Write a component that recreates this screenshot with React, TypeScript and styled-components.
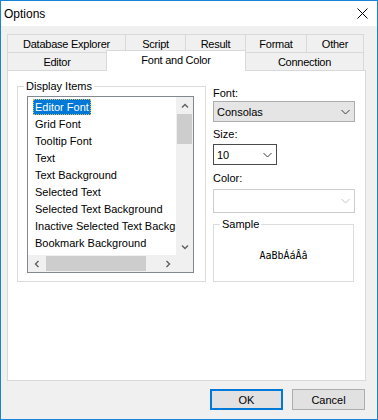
import React from 'react';
import styled, { createGlobalStyle } from 'styled-components';

const GlobalStyle = createGlobalStyle`
  html, body {
    margin: 0;
    padding: 0;
    background: #fff;
  }
  body {
    font-family: "Liberation Sans", Arial, sans-serif;
    font-size: 11px;
    color: #000;
  }
  * {
    box-sizing: border-box;
  }
`;

const Window = styled.div`
  width: 378px;
  height: 420px;
  border: 1px solid #1883d7;
  background: #f0f0f0;
  display: flex;
  flex-direction: column;
`;

const TitleBar = styled.div`
  height: 25px;
  flex-shrink: 0;
  background: #fff;
  display: flex;
  align-items: center;
  justify-content: space-between;
  padding-left: 3px;
  font-size: 12px;
`;

const CloseBox = styled.div`
  width: 30px;
  height: 25px;
  display: flex;
  align-items: center;
  justify-content: center;
`;

const Body = styled.div`
  flex: 1;
  display: flex;
  flex-direction: column;
  padding: 8px 11px 9px 6px;
`;

const TabRow = styled.div`
  display: flex;
  height: 18px;
`;

const Tab = styled.div<{ $w: number; $active?: boolean }>`
  width: ${p => p.$w}px;
  height: ${p => (p.$active ? 21 : 18)}px;
  margin-top: ${p => (p.$active ? -2 : 0)}px;
  background: ${p => (p.$active ? '#fff' : '#f0f0f0')};
  border: 1px solid #d9d9d9;
  border-bottom: none;
  position: relative;
  z-index: ${p => (p.$active ? 2 : 0)};
  display: flex;
  align-items: center;
  justify-content: center;
  letter-spacing: -0.25px;
  padding-bottom: ${p => (p.$active ? 2 : 0)}px;
  & + & {
    margin-left: -1px;
  }
`;

const Panel = styled.div`
  height: 311px;
  background: #fff;
  border: 1px solid #d9d9d9;
  display: flex;
  align-items: flex-start;
  padding: 8px 0 0 9px;
`;

const Group = styled.fieldset<{ $w: number; $h: number }>`
  width: ${p => p.$w}px;
  height: ${p => p.$h}px;
  margin: 0;
  min-width: 0;
  border: 1px solid #dcdcdc;
  padding: 3px 0 0 9px;
`;

const Legend = styled.legend`
  padding: 0 2px;
  margin-left: -3px;
  line-height: 14px;
  font-size: 11px;
`;

const ListBox = styled.div`
  width: 167px;
  height: 177px;
  border: 1px solid #828790;
  display: grid;
  grid-template-columns: 1fr 17px;
  grid-template-rows: 1fr 17px;
`;

const Items = styled.div`
  overflow: hidden;
  padding-top: 1px;
`;

const Item = styled.div<{ $selected?: boolean }>`
  height: 17px;
  padding: 1px 0 0 5px;
  white-space: nowrap;
  & > span {
    display: inline-block;
    line-height: 16px;
    height: 16px;
    padding: 0 2px;
    background: ${p => (p.$selected ? '#0078d7' : 'transparent')};
    color: ${p => (p.$selected ? '#fff' : '#000')};
    outline: ${p => (p.$selected ? '1px dotted #d8c060' : 'none')};
    outline-offset: -1px;
  }
`;

const VScroll = styled.div`
  background: #f0f0f0;
  display: flex;
  flex-direction: column;
`;

const HScroll = styled.div`
  background: #f0f0f0;
  display: flex;
  align-items: center;
`;

const Corner = styled.div`
  background: #f0f0f0;
`;

const ArrowBox = styled.div`
  width: 17px;
  height: 17px;
  flex-shrink: 0;
  display: flex;
  align-items: center;
  justify-content: center;
`;

const Track = styled.div<{ $horizontal?: boolean }>`
  flex: 1;
  display: flex;
  flex-direction: ${p => (p.$horizontal ? 'row' : 'column')};
  align-items: center;
`;

const Thumb = styled.div<{ $horizontal?: boolean; $size: number; $offset: number }>`
  background: #cdcdcd;
  width: ${p => (p.$horizontal ? `${p.$size}px` : '15px')};
  height: ${p => (p.$horizontal ? '15px' : `${p.$size}px`)};
  margin-left: ${p => (p.$horizontal ? p.$offset : 0)}px;
  margin-top: ${p => (p.$horizontal ? 0 : p.$offset)}px;
`;

const Side = styled.div`
  width: 142px;
  margin: 7px 0 0 7px;
  display: flex;
  flex-direction: column;
`;

const Caption = styled.div<{ $top: number; $bottom: number }>`
  line-height: 14px;
  margin-top: ${p => p.$top}px;
  margin-bottom: ${p => p.$bottom}px;
`;

const Combo = styled.div<{ $w: number; $h: number; $variant: 'list' | 'edit' | 'disabled' }>`
  width: ${p => p.$w}px;
  height: ${p => p.$h}px;
  display: flex;
  align-items: center;
  padding-left: 3px;
  background: ${p => (p.$variant === 'list' ? '#e5e5e5' : '#fff')};
  border: 1px solid
    ${p =>
      p.$variant === 'list' ? '#adadad' : p.$variant === 'edit' ? '#4a4a4a' : '#cccccc'};
`;

const ComboText = styled.span`
  flex: 1;
`;

const SampleText = styled.div`
  padding-top: 16px;
  padding-right: 9px;
  text-align: center;
  line-height: 12px;
  font-family: "DejaVu Sans Mono", "Liberation Mono", monospace;
  font-size: 10px;
  color: #000;
`;

const Footer = styled.div`
  margin-top: 8px;
  display: flex;
  justify-content: flex-end;
  gap: 9px;
  padding-right: 1px;
`;

const Button = styled.div<{ $default?: boolean }>`
  width: 73px;
  height: 21px;
  background: #e1e1e1;
  border: ${p => (p.$default ? '2px solid #0078d7' : '1px solid #adadad')};
  display: flex;
  align-items: center;
  justify-content: center;
  font-size: 11px;
`;

const Chevron = ({ dir, color = '#606060' }: { dir: 'up' | 'down' | 'left' | 'right'; color?: string }) => {
  const pts = {
    up: '1,5.5 4,2.5 7,5.5',
    down: '1,2.5 4,5.5 7,2.5',
    left: '5.5,1 2.5,4 5.5,7',
    right: '2.5,1 5.5,4 2.5,7'
  }[dir];
  return (
    <svg width="8" height="8" viewBox="0 0 8 8">
      <polyline points={pts} fill="none" stroke={color} strokeWidth="1.4" />
    </svg>
  );
};

const DropArrow = ({ color }: { color: string }) => (
  <ArrowBox>
    <svg width="9" height="6" viewBox="0 0 9 6">
      <polyline points="0.5,1 4.5,5 8.5,1" fill="none" stroke={color} strokeWidth="1" />
    </svg>
  </ArrowBox>
);

const topTabs = [
  { label: 'Database Explorer', w: 119 },
  { label: 'Script', w: 61 },
  { label: 'Result', w: 61 },
  { label: 'Format', w: 62 },
  { label: 'Other', w: 58 }
];

const bottomTabs = [
  { label: 'Editor', w: 100 },
  { label: 'Font and Color', w: 140, active: true },
  { label: 'Connection', w: 119 }
];

const displayItems = [
  'Editor Font',
  'Grid Font',
  'Tooltip Font',
  'Text',
  'Text Background',
  'Selected Text',
  'Selected Text Background',
  'Inactive Selected Text Background',
  'Bookmark Background'
];

const App = () => {
  return (
    <>
      <GlobalStyle />
      <Window>
        <TitleBar>
          <span>Options</span>
          <CloseBox>
            <svg width="11" height="11" viewBox="0 0 11 11">
              <path d="M0.5 0.5 L10.5 10.5 M10.5 0.5 L0.5 10.5" stroke="#000" strokeWidth="1" />
            </svg>
          </CloseBox>
        </TitleBar>

        <Body>
          <TabRow>
            {topTabs.map(t => (
              <Tab key={t.label} $w={t.w}>
                {t.label}
              </Tab>
            ))}
          </TabRow>
          <TabRow>
            {bottomTabs.map(t => (
              <Tab key={t.label} $w={t.w} $active={t.active}>
                {t.label}
              </Tab>
            ))}
          </TabRow>

          <Panel>
            <Group $w={189} $h={203}>
              <Legend>Display Items</Legend>
              <ListBox>
                <Items>
                  {displayItems.map((item, i) => (
                    <Item key={item} $selected={i === 0}>
                      <span>{item}</span>
                    </Item>
                  ))}
                </Items>
                <VScroll>
                  <ArrowBox>
                    <Chevron dir="up" />
                  </ArrowBox>
                  <Track>
                    <Thumb $size={30} $offset={0} />
                  </Track>
                  <ArrowBox>
                    <Chevron dir="down" />
                  </ArrowBox>
                </VScroll>
                <HScroll>
                  <ArrowBox>
                    <Chevron dir="left" />
                  </ArrowBox>
                  <Track $horizontal>
                    <Thumb $horizontal $size={100} $offset={1} />
                  </Track>
                  <ArrowBox>
                    <Chevron dir="right" />
                  </ArrowBox>
                </HScroll>
                <Corner />
              </ListBox>
            </Group>

            <Side>
              <Caption $top={0} $bottom={1}>Font:</Caption>
              <Combo $w={142} $h={21} $variant="list">
                <ComboText>Consolas</ComboText>
                <DropArrow color="#3c3c3c" />
              </Combo>

              <Caption $top={5} $bottom={3}>Size:</Caption>
              <Combo $w={64} $h={21} $variant="edit">
                <ComboText>10</ComboText>
                <DropArrow color="#3c3c3c" />
              </Combo>

              <Caption $top={6} $bottom={4}>Color:</Caption>
              <Combo $w={142} $h={24} $variant="disabled">
                <ComboText />
                <DropArrow color="#c4c4c4" />
              </Combo>

              <Group $w={141} $h={65} style={{ marginTop: 4 }}>
                <Legend>Sample</Legend>
                <SampleText>AaBbÁáÂâ</SampleText>
              </Group>
            </Side>
          </Panel>

          <Footer>
            <Button $default>OK</Button>
            <Button>Cancel</Button>
          </Footer>
        </Body>
      </Window>
    </>
  );
};

export default App;
